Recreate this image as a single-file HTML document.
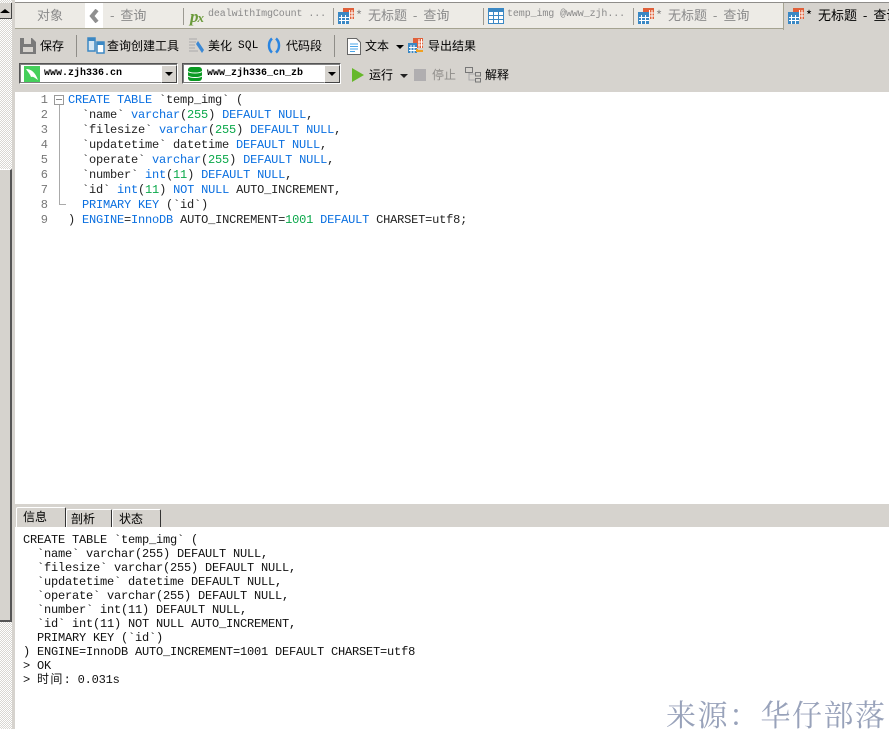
<!DOCTYPE html>
<html><head><meta charset="utf-8"><style>
html,body{margin:0;padding:0}
body{width:889px;height:729px;position:relative;overflow:hidden;background:#fff;font-family:"Liberation Sans","Noto Sans CJK SC",sans-serif}
.a{position:absolute}
.t{position:absolute;white-space:pre;font-size:12px;line-height:16px;color:#000;font-family:"WenQuanYi Zen Hei","Noto Sans CJK SC",sans-serif}
.g{color:#8a8a8a}
.h{word-spacing:3px}
.m{font-family:"Liberation Mono",monospace;letter-spacing:-.2px;font-size:12px}
.sm{font-size:10px;letter-spacing:-.1px;line-height:16px}
.cb{font-size:10px;letter-spacing:0;line-height:15px;font-weight:bold}
.code{position:absolute;white-space:pre;font:12px/15px "Liberation Mono",monospace;letter-spacing:-.2px;color:#222}
.code b{font-weight:normal;color:#0a6fe0}.code i{font-style:normal;color:#0aa84a}
.msg{position:absolute;white-space:pre;font:12px/14px "Liberation Mono","WenQuanYi Zen Hei",monospace;letter-spacing:-.2px;color:#111}
.sep{position:absolute;width:1px;background:#9c9a92}
.nums{position:absolute;white-space:pre;text-align:right;font:12px/15px "Liberation Mono",monospace;color:#777;width:32px;left:16px;top:93px}
</style></head><body>
<!-- left scrollbar -->
<div class="a" style="left:0;top:0;width:12px;height:729px;background:repeating-conic-gradient(#d9d7d2 0 25%,#fff 0 50%) 0 0/2px 2px"></div>
<div class="a" style="left:12px;top:0;width:3px;height:729px;background:#d6d3ce"></div>
<div class="a" style="left:0;top:3px;width:12px;height:16px;background:#d6d3ce;border-right:1px solid #444;border-bottom:1px solid #444;box-sizing:border-box"></div>
<div class="a" style="left:0;top:9px;width:0;height:0;border:5px solid transparent;border-top:0;border-bottom:4px solid #000"></div>
<div class="a" style="left:0;top:169px;width:12px;height:453px;background:#d6d3ce;border-top:1px solid #fff;border-right:2px solid #555;border-bottom:2px solid #555;box-sizing:border-box"></div>
<!-- tab bar -->
<div class="a" style="left:15px;top:2px;width:874px;height:27px;background:#edebe6;border-top:1px solid #8f8d8a;border-bottom:1px solid #a5a391;box-sizing:border-box"></div>
<div class="t g" style="left:37px;top:7px;font-size:13px">对象</div>
<div class="a" style="left:85px;top:3px;width:18px;height:25px;background:#fff"></div>
<svg class="a" style="left:89px;top:9px" width="12" height="14"><path d="M8 1 L3 7 L8 13" fill="none" stroke="#8f8f8f" stroke-width="4"/></svg>
<div class="t g h" style="left:110px;top:7px;font-size:13px">- 查询</div>
<div class="sep" style="left:183px;top:8px;height:17px"></div>
<div class="a" style="left:190px;top:7px;font:italic bold 17px/20px 'Liberation Serif',serif;color:#6a9a3a">p<span style="font-size:13px;margin-left:-1px">x</span></div>
<div class="t g m sm" style="left:208px;top:7px">dealwithImgCount ...</div>
<div class="sep" style="left:333px;top:8px;height:17px"></div>
<svg class="a" style="left:338px;top:8px" width="18" height="17"><rect x="5" y="0" width="11" height="11" fill="#e0603a"/><path d="M11.500 2v9M14 2v9M11 5h5M11 8h5" stroke="#fff"/><rect x="0" y="4" width="11" height="12" fill="#3b88c4"/><path d="M3.500 7v9M7.500 7v9M1 9.500h10M1 12.500h10" stroke="#fff"/></svg>
<div class="t g h" style="left:356px;top:7px;font-size:13px">* 无标题 - 查询</div>
<div class="sep" style="left:483px;top:8px;height:17px"></div>
<svg class="a" style="left:488px;top:8px" width="16" height="16"><rect width="16" height="16" fill="#3b88c4"/><rect x="1" y="4" width="14" height="11" fill="#fff"/><path d="M5.500 4v11M10.500 4v11M1 7.500h14M1 11.500h14" stroke="#3b88c4"/></svg>
<div class="t g m sm" style="left:507px;top:7px">temp_img @www_zjh...</div>
<div class="sep" style="left:633px;top:8px;height:17px"></div>
<svg class="a" style="left:638px;top:8px" width="18" height="17"><rect x="5" y="0" width="11" height="11" fill="#e0603a"/><path d="M11.500 2v9M14 2v9M11 5h5M11 8h5" stroke="#fff"/><rect x="0" y="4" width="11" height="12" fill="#3b88c4"/><path d="M3.500 7v9M7.500 7v9M1 9.500h10M1 12.500h10" stroke="#fff"/></svg>
<div class="t g h" style="left:656px;top:7px;font-size:13px">* 无标题 - 查询</div>
<!-- toolbar bg -->
<div class="a" style="left:15px;top:29px;width:874px;height:63px;background:#d6d3ce"></div>
<div class="a" style="left:783px;top:3px;width:106px;height:27px;background:#d6d3ce;border-left:1px solid #a5a391;box-sizing:border-box"></div>
<svg class="a" style="left:788px;top:8px" width="18" height="17"><rect x="5" y="0" width="11" height="11" fill="#e0603a"/><path d="M11.500 2v9M14 2v9M11 5h5M11 8h5" stroke="#fff"/><rect x="0" y="4" width="11" height="12" fill="#3b88c4"/><path d="M3.500 7v9M7.500 7v9M1 9.500h10M1 12.500h10" stroke="#fff"/></svg>
<div class="t h" style="left:806px;top:7px;font-size:13px">* 无标题 - 查询</div>
<!-- row 1 -->
<svg class="a" style="left:20px;top:38px" width="16" height="16"><path d="M0 0h12l4 4v12H0z" fill="#7a7a7a"/><rect x="4" y="0" width="7" height="6" fill="#d6d3ce"/><rect x="3" y="9" width="10" height="5" fill="#d6d3ce"/></svg>
<div class="t" style="left:40px;top:38px">保存</div>
<div class="sep" style="left:76px;top:35px;height:22px;background:#8f8d88"></div>
<svg class="a" style="left:87px;top:37px" width="18" height="17"><rect x="1" y="1" width="7" height="13" fill="#d6e6f2" stroke="#3b88c4" stroke-width="1.500"/><rect x="1" y="1" width="7" height="3" fill="#3b88c4"/><rect x="10" y="5" width="7" height="11" fill="#fff" stroke="#3b88c4" stroke-width="1.500"/><rect x="10" y="5" width="7" height="3" fill="#3b88c4"/></svg>
<div class="t" style="left:107px;top:38px">查询创建工具</div>
<svg class="a" style="left:189px;top:37px" width="17" height="17"><path d="M0 2h8M0 5h7M0 8h6M0 11h6M0 14h9" stroke="#aaa"/><path d="M9 4l6 9-2 3-6-9z" fill="#3b88d4"/></svg>
<div class="t" style="left:208px;top:38px">美化</div>
<div class="t m" style="left:238px;top:38px;font-size:11px;letter-spacing:.3px">SQL</div>
<svg class="a" style="left:266px;top:37px" width="16" height="17" fill="none" stroke="#2b85e0" stroke-width="2.500"><path d="M6 1.500C2 5 2 12 6 15.500"/><path d="M10 1.500C14 5 14 12 10 15.500"/></svg>
<div class="t" style="left:286px;top:38px">代码段</div>
<div class="sep" style="left:334px;top:35px;height:22px;background:#8f8d88"></div>
<svg class="a" style="left:347px;top:38px" width="14" height="17"><path d="M.5.500h9l4 4v12H.5z" fill="#fff" stroke="#666"/><path d="M3 6h8M3 8.500h8M3 11h8M3 13.500h5" stroke="#4aa5e8"/></svg>
<div class="t" style="left:365px;top:38px">文本</div>
<div class="a" style="left:396px;top:45px;border:4px solid transparent;border-top:4px solid #000;border-bottom:0"></div>
<svg class="a" style="left:408px;top:38px" width="18" height="16"><rect x="5" y="0" width="10" height="10" fill="#e0603a"/><path d="M11 1v9M13.500 1v9M10 4h5M10 7h5" stroke="#fff"/><rect x="0" y="5" width="9" height="10" fill="#3b88c4"/><path d="M3 7v8M6 7v8M1 9.500h8M1 12.500h8" stroke="#fff"/><path d="M9 11v2h6" fill="none" stroke="#f0a020" stroke-width="2"/></svg>
<div class="t" style="left:428px;top:38px">导出结果</div>
<!-- row 2 combos -->
<div class="a" style="left:19px;top:63px;width:159px;height:21px;background:#fff;border:1px solid #555;border-right-color:#fff;border-bottom-color:#fff;box-sizing:border-box;outline:1px solid #808080;outline-offset:-2px"></div>
<svg class="a" style="left:24px;top:66px" width="16" height="16"><rect width="16" height="16" fill="#45cf5b"/><path d="M2 3c5 0 9 3 12 11-3-2-5-4-7-3-1-3-3-5-5-8z" fill="#fff"/></svg>
<div class="t m cb" style="left:44px;top:66px">www.zjh336.cn</div>
<div class="a" style="left:161px;top:65px;width:16px;height:18px;background:#d6d3ce;border:1px solid;border-color:#fff #444 #444 #fff;box-sizing:border-box"></div>
<div class="a" style="left:165px;top:72px;border:4px solid transparent;border-top:4px solid #000;border-bottom:0"></div>
<div class="a" style="left:182px;top:63px;width:159px;height:21px;background:#fff;border:1px solid #555;border-right-color:#fff;border-bottom-color:#fff;box-sizing:border-box;outline:1px solid #808080;outline-offset:-2px"></div>
<svg class="a" style="left:187px;top:66px" width="16" height="16"><rect x="1" y="1" width="14" height="14" rx="3" fill="#0a9a22"/><path d="M1 5.500c3 2 11 2 14 0M1 10c3 2 11 2 14 0" stroke="#fff" fill="none"/></svg>
<div class="t m cb" style="left:207px;top:66px">www_zjh336_cn_zb</div>
<div class="a" style="left:324px;top:65px;width:16px;height:18px;background:#d6d3ce;border:1px solid;border-color:#fff #444 #444 #fff;box-sizing:border-box"></div>
<div class="a" style="left:328px;top:72px;border:4px solid transparent;border-top:4px solid #000;border-bottom:0"></div>
<div class="a" style="left:352px;top:68px;border:7px solid transparent;border-left:12px solid #66b82a;border-right:0"></div>
<div class="t" style="left:369px;top:67px">运行</div>
<div class="a" style="left:400px;top:74px;border:4px solid transparent;border-top:4px solid #222;border-bottom:0"></div>
<div class="a" style="left:414px;top:69px;width:12px;height:12px;background:#b0aeb0"></div>
<div class="t" style="left:432px;top:67px;color:#8f8d8a">停止</div>
<svg class="a" style="left:465px;top:67px" width="17" height="16" fill="none" stroke="#777"><rect x=".5" y=".5" width="7" height="5"/><rect x="10.500" y="5.500" width="5" height="3.500"/><rect x="10.500" y="11.500" width="5" height="3.500"/><path d="M4 6v7h6M4 7h6" stroke="#aaa"/></svg>
<div class="t" style="left:485px;top:67px">解释</div>
<!-- editor -->
<div class="nums">1
2
3
4
5
6
7
8
9</div>
<div class="a" style="left:54px;top:95px;border:1px solid #9a9a9a;width:8px;height:8px"></div>
<div class="a" style="left:56px;top:99px;width:6px;height:1px;background:#888"></div>
<div class="a" style="left:59px;top:105px;width:1px;height:99px;background:#aaa"></div>
<div class="a" style="left:59px;top:204px;width:7px;height:1px;background:#aaa"></div>
<div class="code" style="left:68px;top:93px"><b>CREATE TABLE</b> `temp_img` (
  `name` <b>varchar</b>(<i>255</i>) <b>DEFAULT NULL</b>,
  `filesize` <b>varchar</b>(<i>255</i>) <b>DEFAULT NULL</b>,
  `updatetime` datetime <b>DEFAULT NULL</b>,
  `operate` <b>varchar</b>(<i>255</i>) <b>DEFAULT NULL</b>,
  `number` <b>int</b>(<i>11</i>) <b>DEFAULT NULL</b>,
  `id` <b>int</b>(<i>11</i>) <b>NOT NULL</b> AUTO_INCREMENT,
  <b>PRIMARY KEY</b> (`id`)
) <b>ENGINE</b>=<b>InnoDB</b> AUTO_INCREMENT=<i>1001</i> <b>DEFAULT</b> CHARSET=utf8;</div>
<!-- bottom tabs -->
<div class="a" style="left:15px;top:504px;width:874px;height:23px;background:#d6d3ce"></div>
<div class="a" style="left:16px;top:507px;width:50px;height:20px;background:#d6d3ce;border-top:1px solid #fff;border-left:1px solid #fff;border-right:1px solid #333;box-sizing:border-box;border-radius:2px 2px 0 0"></div>
<div class="a" style="left:66px;top:509px;width:46px;height:18px;border-top:1px solid #fff;border-left:1px solid #fff;border-right:1px solid #333;box-sizing:border-box;border-radius:2px 2px 0 0"></div>
<div class="a" style="left:112px;top:509px;width:49px;height:18px;border-top:1px solid #fff;border-left:1px solid #fff;border-right:1px solid #333;box-sizing:border-box;border-radius:2px 2px 0 0"></div>
<div class="t" style="left:23px;top:509px">信息</div>
<div class="t" style="left:71px;top:511px">剖析</div>
<div class="t" style="left:119px;top:511px">状态</div>
<!-- message -->
<div class="msg" style="left:23px;top:533px">CREATE TABLE `temp_img` (
  `name` varchar(255) DEFAULT NULL,
  `filesize` varchar(255) DEFAULT NULL,
  `updatetime` datetime DEFAULT NULL,
  `operate` varchar(255) DEFAULT NULL,
  `number` int(11) DEFAULT NULL,
  `id` int(11) NOT NULL AUTO_INCREMENT,
  PRIMARY KEY (`id`)
) ENGINE=InnoDB AUTO_INCREMENT=1001 DEFAULT CHARSET=utf8
&gt; OK
&gt; <span style="letter-spacing:1.300px">时间</span>: 0.031s</div>
<!-- watermark -->
<div class="a" style="left:666px;top:696px;white-space:pre;font:30px/34px 'Noto Serif CJK SC','Noto Sans CJK SC',serif;color:#98a2ba;letter-spacing:1.500px">来源：华仔部落</div>
</body></html>
